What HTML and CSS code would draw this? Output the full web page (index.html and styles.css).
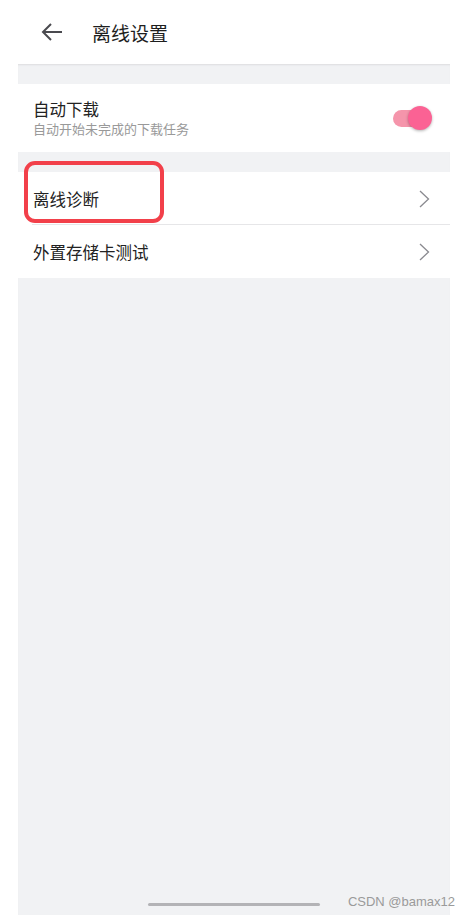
FILE: index.html
```html
<!DOCTYPE html>
<html>
	<head>
		<meta charset="utf-8">
		<title>离线设置</title>
		<link rel="stylesheet" href="styles.css">
	</head>
	<body>
		<div class="header">
			<svg class="back" width="22" height="18" viewBox="0 0 22 18">
				<path d="M21 9H2M10 1L2 9l8 8" fill="none" stroke="#4a4a4f" stroke-width="2"/>
			</svg>
			<span class="title">离线设置</span>
		</div>
		<div class="screen">
			<div class="row row-switch">
				<div class="texts">
					<div class="label">自动下载</div>
					<div class="sub">自动开始未完成的下载任务</div>
				</div>
				<div class="switch"><span class="knob"></span></div>
			</div>
			<div class="group">
				<div class="row row-link line">
					<span class="label">离线诊断</span>
					<svg class="arrow" width="11" height="18" viewBox="0 0 11 18"><path d="M1 1l8.5 8L1 17" fill="none" stroke="#8a8a90" stroke-width="1.3"/></svg>
					<span class="mark"></span>
				</div>
				<div class="row row-link">
					<span class="label">外置存储卡测试</span>
					<svg class="arrow" width="11" height="18" viewBox="0 0 11 18"><path d="M1 1l8.5 8L1 17" fill="none" stroke="#8a8a90" stroke-width="1.3"/></svg>
				</div>
			</div>
		</div>
		<div class="homebar"></div>
		<div class="watermark">CSDN @bamax12</div>
	</body>
</html>
```

FILE: styles.css
```css
*{margin:0;padding:0}
body{
	background:#fff;
	font-family:"Noto Sans CJK SC",sans-serif;
	color:#222;
	width:470px;
	height:915px;
	overflow:hidden;
	position:relative;
}
.header{
	height:64px;
	display:flex;
	align-items:center;
	padding-left:41px;
}
.header .back{margin-right:29px;}
.header .title{font-size:19px;color:#1e1e1e;}
.screen{
	margin:0 20px 0 18px;
	height:851px;
	background:#f1f2f4;
	padding-top:20px;
	box-sizing:border-box;
	box-shadow:inset 0 2px 2px -1px #dcdcdf;
}
.row{
	background:#fff;
	display:flex;
	align-items:center;
	justify-content:space-between;
	padding:0 18px 0 15px;
	position:relative;
}
.row-switch{height:68px;}
.label{font-size:16.5px;line-height:20px;}
.sub{font-size:13px;color:#999;line-height:16px;margin-top:2px;}
.switch{
	width:29px;
	height:17px;
	border-radius:9px;
	background:#f595ab;
	position:relative;
	margin-right:10px;
}
.switch .knob{
	position:absolute;
	left:15px;
	top:-4px;
	width:24px;
	height:24px;
	border-radius:50%;
	background:#fb6294;
	box-shadow:0 1px 3px rgba(0,0,0,0.3);
}
.group{margin-top:20px;}
.row-link{height:53px;}
.row-link.line::after{
	content:"";
	position:absolute;
	left:14px;
	right:0;
	bottom:0;
	height:1px;
	background:#e6e6e8;
}
.row-link .arrow{margin-right:2px;}
.row-link .label{margin-top:1px;}
.mark{
	position:absolute;
	left:6px;
	top:-11px;
	width:132px;
	height:54px;
	border:4px solid #f2404a;
	border-radius:11px;
}
.homebar{
	position:absolute;
	left:148px;
	top:903px;
	width:172px;
	height:3px;
	background:#b3b3b6;
	border-radius:2px;
}
.watermark{
	position:absolute;
	right:15px;
	top:894px;
	font-family:"Liberation Sans",sans-serif;
	font-size:13px;
	color:#9a9a9a;
}
```
